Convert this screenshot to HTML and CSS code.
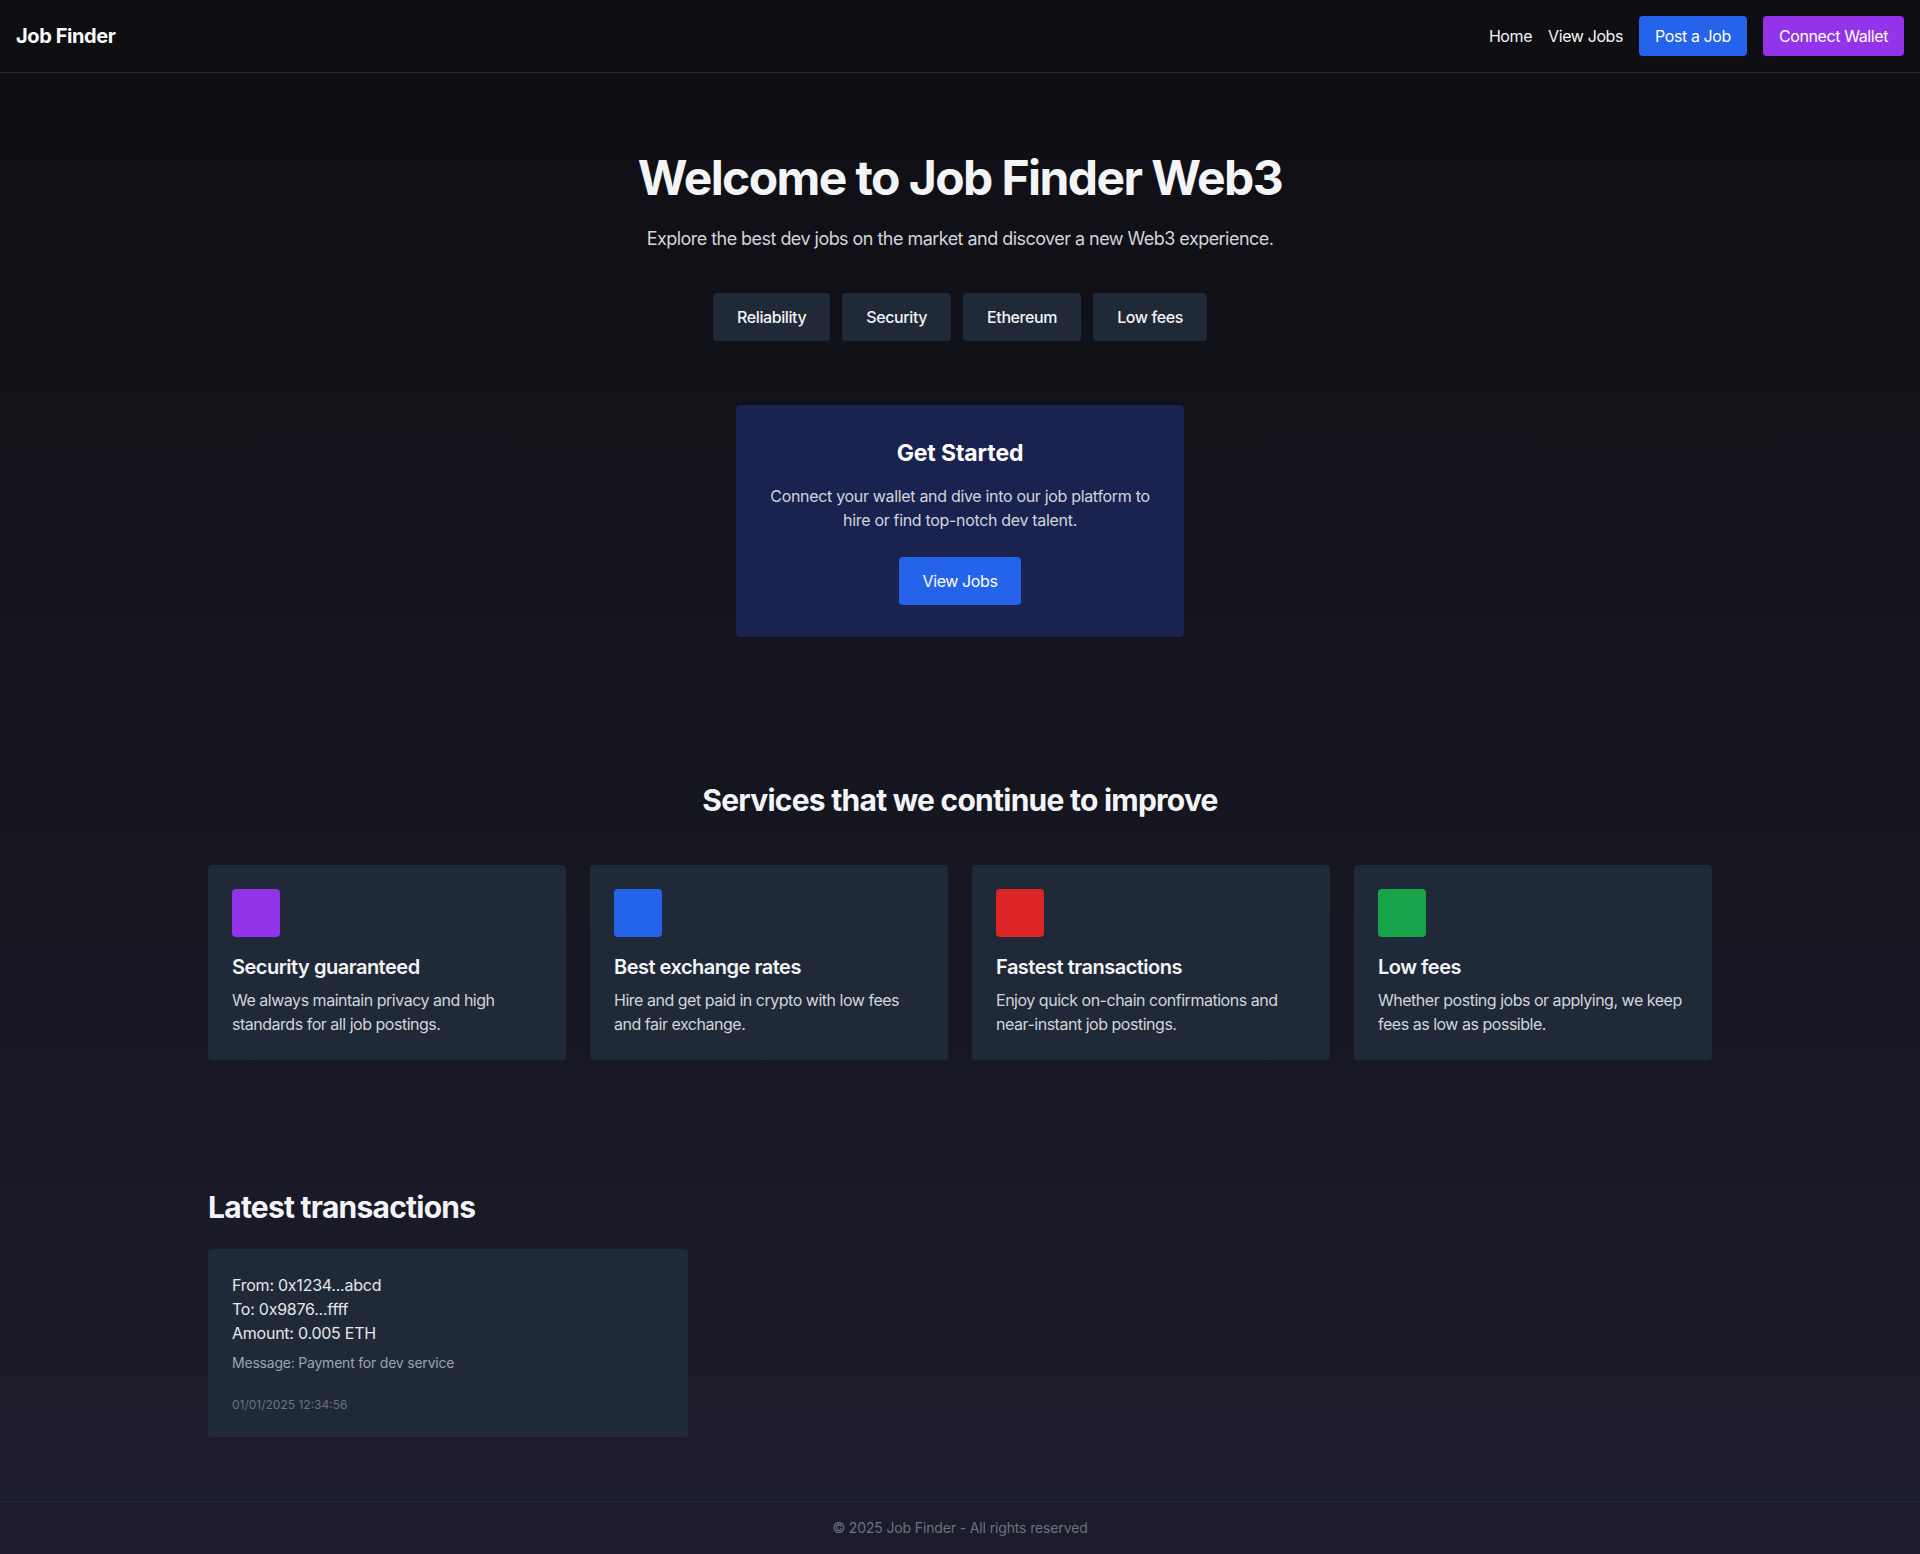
FILE: index.html
```html
<!DOCTYPE html>
<html lang="en">
<head>
<meta charset="utf-8">
<title>Job Finder</title>
<link rel="stylesheet" href="styles.css">
</head>
<body>
<div class="page">
  <header class="nav">
    <div class="logo">Job Finder</div>
    <nav class="nav-right">
      <a class="nav-link" href="#">Home</a>
      <a class="nav-link" href="#">View Jobs</a>
      <a class="btn btn-blue" href="#">Post a Job</a>
      <a class="btn btn-purple" href="#">Connect Wallet</a>
    </nav>
  </header>

  <main class="main">
    <section class="hero">
      <h1 class="hero-title">Welcome to Job Finder Web3</h1>
      <p class="hero-sub">Explore the best dev jobs on the market and discover a new Web3 experience.</p>
      <div class="tags">
        <span class="tag">Reliability</span>
        <span class="tag">Security</span>
        <span class="tag">Ethereum</span>
        <span class="tag">Low fees</span>
      </div>
      <div class="start-card">
        <h2 class="start-title">Get Started</h2>
        <p class="start-text">Connect your wallet and dive into our job platform to hire or find top-notch dev talent.</p>
        <a class="btn-lg" href="#">View Jobs</a>
      </div>
    </section>

    <section class="services">
      <h2 class="section-title center">Services that we continue to improve</h2>
      <div class="grid">
        <div class="card">
          <div class="icon purple"></div>
          <h3 class="card-title">Security guaranteed</h3>
          <p class="card-text">We always maintain privacy and high standards for all job postings.</p>
        </div>
        <div class="card">
          <div class="icon blue"></div>
          <h3 class="card-title">Best exchange rates</h3>
          <p class="card-text">Hire and get paid in crypto with low fees and fair exchange.</p>
        </div>
        <div class="card">
          <div class="icon red"></div>
          <h3 class="card-title">Fastest transactions</h3>
          <p class="card-text">Enjoy quick on-chain confirmations and near-instant job postings.</p>
        </div>
        <div class="card">
          <div class="icon green"></div>
          <h3 class="card-title">Low fees</h3>
          <p class="card-text">Whether posting jobs or applying, we keep fees as low as possible.</p>
        </div>
      </div>
    </section>

    <section class="tx">
      <h2 class="section-title">Latest transactions</h2>
      <div class="tx-card">
        <p class="tx-line">From: 0x1234...abcd</p>
        <p class="tx-line">To: 0x9876...ffff</p>
        <p class="tx-line">Amount: 0.005 ETH</p>
        <p class="tx-msg">Message: Payment for dev service</p>
        <p class="tx-date">01/01/2025 12:34:56</p>
      </div>
    </section>
  </main>

  <footer class="footer">© 2025 Job Finder - All rights reserved</footer>
</div>
</body>
</html>
```

FILE: styles.css
```css
* { box-sizing: border-box; }
html, body { margin: 0; padding: 0; }
body {
  font-family: Inter, "Noto Sans", "Liberation Sans", sans-serif;
  color: #f3f4f6;
  background: #1c1c2c;
}
p, h1, h2, h3 { margin: 0; }
a { text-decoration: none; color: inherit; }

.page {
  min-height: 1554px;
  display: flex;
  flex-direction: column;
  background: linear-gradient(to bottom, #0e0e13 0%, #13131b 35%, #1d1d2e 100%);
}

.nav {
  height: 73px;
  display: flex;
  align-items: center;
  justify-content: space-between;
  padding: 16px 16px 17px;
  background: #0e0e13;
  border-bottom: 1px solid #1f2937;
}
.logo { font-size: 20px; font-weight: 700; line-height: 28px; color: #f9fafb; letter-spacing: -0.02em; }
.nav-right { display: flex; align-items: center; gap: 16px; }
.nav-link { font-size: 16px; line-height: 24px; color: #f3f4f6; letter-spacing: -0.025em; }
.btn {
  font-size: 16px; line-height: 24px; padding: 8px 16px; border-radius: 4px; color: #fff;
  letter-spacing: -0.025em;
}
.btn-blue { background: #2563eb; }
.btn-purple { background: #9333ea; }

.main { flex: 1; padding-bottom: 64px; }

.hero { display: flex; flex-direction: column; align-items: center; padding-top: 81px; }
.hero-title { font-size: 48px; line-height: 48px; font-weight: 700; color: #f3f4f6; letter-spacing: -0.033em; }
.hero-sub { margin-top: 23px; font-size: 18px; line-height: 28px; color: #d1d5db; letter-spacing: -0.03em; }
.tags { display: flex; gap: 12px; margin-top: 40px; }
.tag {
  background: #1f2937; border-radius: 4px; padding: 12px 24px; font-size: 16px; line-height: 24px;
  font-weight: 500; color: #f3f4f6; letter-spacing: -0.025em;
}

.start-card {
  margin-top: 64px; width: 448px; padding: 32px; background: #1a2350; border-radius: 4px;
  display: flex; flex-direction: column; align-items: center; text-align: center;
}
.start-title { font-size: 23px; line-height: 32px; font-weight: 700; color: #fff; letter-spacing: -0.005em; }
.start-text { margin-top: 15px; font-size: 16px; line-height: 24px; color: #d1d5db; letter-spacing: -0.02em; }
.btn-lg {
  margin-top: 25px; background: #2563eb; color: #fff; border-radius: 4px; padding: 12px 24px;
  font-size: 16px; line-height: 24px; letter-spacing: -0.025em;
}

.services { margin-top: 145px; }
.section-title { font-size: 30px; line-height: 36px; font-weight: 700; color: #f3f4f6; letter-spacing: -0.025em; }
.center { text-align: center; }
.grid {
  max-width: 1504px; margin: 47px auto 0;
  display: grid; grid-template-columns: repeat(4, 1fr); gap: 24px;
}
.card { background: #1f2937; border-radius: 4px; padding: 24px; }
.icon { width: 48px; height: 48px; border-radius: 4px; margin-bottom: 16px; }
.purple { background: #9333ea; }
.blue { background: #2563eb; }
.red { background: #dc2626; }
.green { background: #16a34a; }
.card-title { font-size: 20px; line-height: 28px; font-weight: 600; color: #f3f4f6; margin-bottom: 7px; letter-spacing: -0.025em; }
.card-text { font-size: 16px; line-height: 24px; color: #d1d5db; letter-spacing: -0.03em; }

.tx { max-width: 1504px; margin: 129px auto 0; width: 100%; }
.tx-card { margin-top: 24px; width: 480px; background: #1f2937; border-radius: 4px; padding: 24px; }
.tx-line { font-size: 16px; line-height: 24px; color: #e5e7eb; letter-spacing: -0.015em; }
.tx-msg { margin-top: 8px; font-size: 14px; line-height: 20px; color: #9ca3af; letter-spacing: -0.015em; }
.tx-date { margin-top: 24px; font-size: 12px; line-height: 16px; color: #6b7280; }

.footer {
  border-top: 1px solid #1f2937;
  background: #1c1c2c;
  text-align: center; padding: 16px; font-size: 14px; line-height: 20px; color: #6b7280;
  letter-spacing: -0.01em;
}
```
